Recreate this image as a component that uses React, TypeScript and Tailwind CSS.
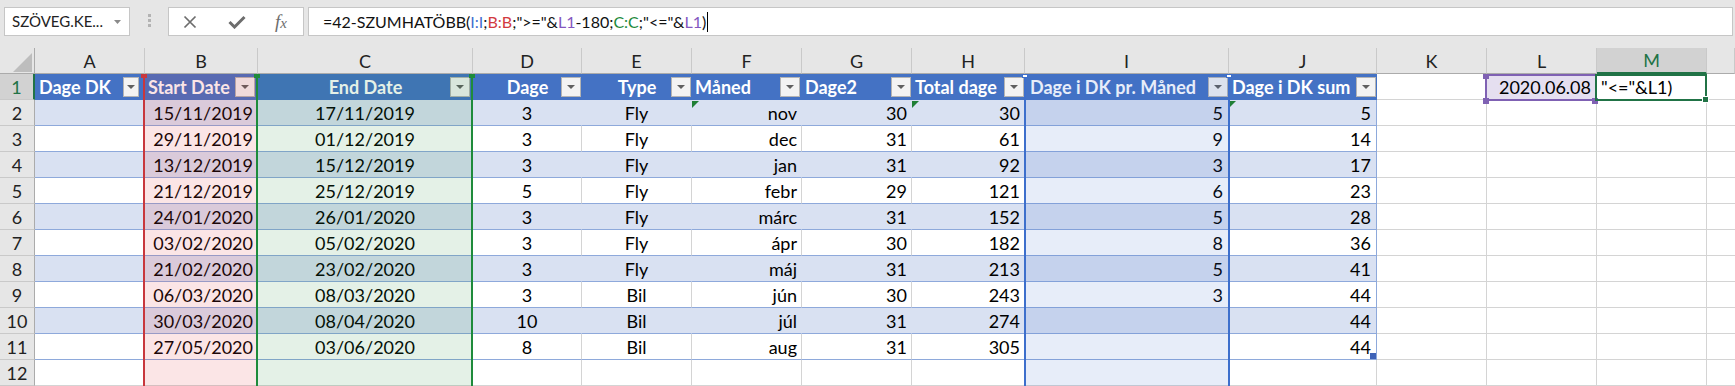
import React from 'react';

const rows: string[][] = [
  ['15/11/2019', '17/11/2019', '3', 'Fly', 'nov', '30', '30', '5', '5'],
  ['29/11/2019', '01/12/2019', '3', 'Fly', 'dec', '31', '61', '9', '14'],
  ['13/12/2019', '15/12/2019', '3', 'Fly', 'jan', '31', '92', '3', '17'],
  ['21/12/2019', '25/12/2019', '5', 'Fly', 'febr', '29', '121', '6', '23'],
  ['24/01/2020', '26/01/2020', '3', 'Fly', 'márc', '31', '152', '5', '28'],
  ['03/02/2020', '05/02/2020', '3', 'Fly', 'ápr', '30', '182', '8', '36'],
  ['21/02/2020', '23/02/2020', '3', 'Fly', 'máj', '31', '213', '5', '41'],
  ['06/03/2020', '08/03/2020', '3', 'Bil', 'jún', '30', '243', '3', '44'],
  ['30/03/2020', '08/04/2020', '10', 'Bil', 'júl', '31', '274', '', '44'],
  ['27/05/2020', '03/06/2020', '8', 'Bil', 'aug', '31', '305', '', '44'],
];

const letters = ['A', 'B', 'C', 'D', 'E', 'F', 'G', 'H', 'I', 'J', 'K', 'L', 'M', ''];

// alignment for A..J
const alignCls = [
  'justify-start pl-[4px]',
  'justify-end pr-[4px]',
  'justify-center',
  'justify-center',
  'justify-center',
  'justify-end pr-[4px]',
  'justify-end pr-[4px]',
  'justify-end pr-[4px]',
  'justify-end pr-[5px]',
  'justify-end pr-[5px]',
];

function FilterBtn({ narrow }: { narrow?: boolean }) {
  return (
    <div
      className={
        narrow
          ? 'w-[16px] h-[20px] shrink-0 bg-[#f3f3f3] border border-[#b4b4b4] flex items-center justify-center'
          : 'w-[20px] h-[20px] shrink-0 bg-[#f3f3f3] border border-[#b4b4b4] flex items-center justify-center'
      }
    >
      <svg width="8" height="4" viewBox="0 0 8 4">
        <polygon points="0,0 8,0 4,4" fill="#606060" />
      </svg>
    </div>
  );
}

function GreenTri() {
  return (
    <svg className="absolute left-0 top-[1px]" width="7" height="7" viewBox="0 0 7 7">
      <polygon points="0,0 7,0 0,7" fill="#1f7f36" />
    </svg>
  );
}

function Toolbar() {
  return (
    <div className="h-[48px] bg-[#e6e6e6] flex items-start pt-[7px]">
      <div className="ml-[4px] w-[126px] h-[29px] bg-white border border-[#c6c6c6] flex items-center justify-between pl-[7px] pr-[8px] text-[15px] text-[#222]">
        <span>SZÖVEG.KE...</span>
        <svg width="7" height="4" viewBox="0 0 7 4">
          <polygon points="0,0 7,0 3.5,4" fill="#8a8a8a" />
        </svg>
      </div>
      <div className="ml-[18px] mt-[7px] flex flex-col gap-[2px]">
        <div className="w-[3px] h-[3px] bg-[#b3b3b3]" />
        <div className="w-[3px] h-[3px] bg-[#b3b3b3]" />
        <div className="w-[3px] h-[3px] bg-[#b3b3b3]" />
      </div>
      <div className="ml-[17px] w-[136px] h-[29px] bg-white border border-[#c6c6c6] flex items-center pl-[14px]">
        <svg width="14" height="14" viewBox="0 0 14 14">
          <path d="M1.5 1.5 L12.5 12.5 M12.5 1.5 L1.5 12.5" stroke="#6d6d6d" strokeWidth="1.7" fill="none" />
        </svg>
        <svg className="ml-[31px]" width="18" height="14" viewBox="0 0 18 14">
          <path d="M1.5 7 L6.5 12 L16.5 2" stroke="#6d6d6d" strokeWidth="3" fill="none" strokeLinejoin="miter" />
        </svg>
        <span className="ml-[29px] font-['Liberation_Serif',serif] italic text-[19px] text-[#6d6d6d] leading-none">
          f<span className="text-[15px]">x</span>
        </span>
      </div>
      <div className="ml-[4px] flex-1 mr-[2px] h-[29px] bg-white border border-[#c6c6c6] flex items-center pl-[14px] text-[16px] text-[#111] whitespace-nowrap">
        <span>=42-SZUMHATÖBB(</span>
        <span className="text-[#3f6fd0]">I:I</span>
        <span>;</span>
        <span className="text-[#d23a3f]">B:B</span>
        <span>;"&gt;="&amp;</span>
        <span className="text-[#8457c0]">L1</span>
        <span>-180;</span>
        <span className="text-[#1d8a3c]">C:C</span>
        <span>;"&lt;="&amp;</span>
        <span className="text-[#8457c0]">L1</span>
        <span>)</span>
        <span className="ml-[1px] w-[1px] h-[20px] bg-black" />
      </div>
    </div>
  );
}

export default function App() {
  const headerCells = [
    <div key="h0" className="bg-[#4472c4] flex items-center justify-between pl-[4px] pr-[6px] overflow-hidden">
      <span>Dage DK</span>
      <FilterBtn narrow />
    </div>,
    <div key="h1" className="bg-[#4472c4] flex items-center justify-between pl-[3px] pr-[3px] overflow-hidden">
      <span>Start Date</span>
      <FilterBtn />
    </div>,
    <div key="h2" className="bg-[#4472c4] grid grid-cols-[24px_1fr_24px] items-center overflow-hidden">
      <span />
      <span className="text-center">End Date</span>
      <div className="flex justify-end pr-[3px]">
        <FilterBtn />
      </div>
    </div>,
    <div key="h3" className="bg-[#4472c4] grid grid-cols-[22px_1fr_22px] items-center overflow-hidden">
      <span />
      <span className="text-center">Dage</span>
      <div className="flex justify-end pr-[1px]">
        <FilterBtn />
      </div>
    </div>,
    <div key="h4" className="bg-[#4472c4] grid grid-cols-[22px_1fr_22px] items-center overflow-hidden">
      <span />
      <span className="text-center">Type</span>
      <div className="flex justify-end pr-[1px]">
        <FilterBtn />
      </div>
    </div>,
    <div key="h5" className="bg-[#4472c4] flex items-center justify-between pl-[3px] pr-[2px] overflow-hidden">
      <span>Måned</span>
      <FilterBtn />
    </div>,
    <div key="h6" className="bg-[#4472c4] flex items-center justify-between pl-[3px] pr-[1px] overflow-hidden">
      <span>Dage2</span>
      <FilterBtn />
    </div>,
    <div key="h7" className="bg-[#4472c4] flex items-center justify-between pl-[3px] pr-[1px] overflow-hidden">
      <span>Total dage</span>
      <FilterBtn />
    </div>,
    <div key="h8" className="bg-[#4472c4] flex items-center justify-between pl-[5px] pr-[1px] overflow-hidden">
      <span>Dage i DK pr. Måned</span>
      <FilterBtn />
    </div>,
    <div key="h9" className="bg-[#4472c4] flex items-center justify-between pl-[3px] pr-[1px] overflow-hidden">
      <span>Dage i DK sum</span>
      <FilterBtn />
    </div>,
  ];

  return (
    <div className="w-[1735px] h-[386px] overflow-hidden bg-white font-['Lato',sans-serif] text-black">
      <Toolbar />
      <div className="relative">
        <div className="grid grid-cols-[35px_110px_113px_215px_109px_110px_110px_110px_113px_204px_148px_110px_110px_110px_1fr] auto-rows-[26px] text-[18px] leading-none whitespace-nowrap">
          {/* column headers */}
          <div className="relative bg-[#e6e6e6] border-r border-b border-r-[#ababab] border-b-[#ababab]">
            <svg className="absolute left-0 top-0" width="35" height="26" viewBox="0 0 35 26">
              <polygon points="32,5 32,24 13,24" fill="#bdbdbd" />
            </svg>
          </div>
          {letters.map((l, i) =>
            l === 'M' ? (
              <div key={'c' + i} className="bg-[#d2d2d2] border-r border-b-2 border-r-[#c9c9c9] border-b-[#217346] flex items-center justify-center text-[#217346]">
                {l}
              </div>
            ) : (
              <div key={'c' + i} className="bg-[#e6e6e6] border-r border-b border-r-[#c9c9c9] border-b-[#ababab] flex items-center justify-center text-[#222]">
                {l}
              </div>
            )
          )}

          {/* row 1 */}
          <div className="bg-[#d2d2d2] border-r-2 border-b border-r-[#217346] border-b-[#c9c9c9] flex items-center justify-center text-[#217346]">
            1
          </div>
          {headerCells.map((c) => (
            <React.Fragment key={(c as any).key}>
              <div className="contents text-white font-bold">{c}</div>
            </React.Fragment>
          ))}
          <div className="bg-white border-r border-b border-[#d4d4d4]" />
          <div className="bg-[#e5dff0] border-r border-b border-[#d4d4d4] flex items-center justify-end pr-[5px]">2020.06.08</div>
          <div className="bg-white border-r border-b border-[#d4d4d4] flex items-center pl-[4px]">"&lt;="&amp;L1)</div>
          <div className="bg-white border-b border-[#d4d4d4]" />

          {/* data rows */}
          {rows.map((r, ri) => {
            const banded = ri % 2 === 0;
            const vals = ['', ...r];
            return (
              <React.Fragment key={'r' + ri}>
                <div className="bg-[#e6e6e6] border-r border-b border-r-[#ababab] border-b-[#c9c9c9] flex items-center justify-center text-[#222]">
                  {ri + 2}
                </div>
                {vals.map((v, ci) => {
                  const right =
                    ci === 9 ? 'border-r-[#8ea9db]' : banded ? 'border-r-[#d9e1f2]' : 'border-r-[#d4d4d4]';
                  const bg = banded ? 'bg-[#d9e1f2]' : 'bg-white';
                  return (
                    <div
                      key={'d' + ci}
                      className={`relative flex items-center border-r border-b border-b-[#8ea9db] ${right} ${bg} ${alignCls[ci]}`}
                    >
                      {ri === 0 && (ci === 5 || ci === 7 || ci === 9) && <GreenTri />}
                      {ri === 9 && ci === 9 && (
                        <div className="absolute right-[0px] bottom-[0px] w-[6px] h-[6px] bg-[#3f63b8]" />
                      )}
                      {v}
                    </div>
                  );
                })}
                <div className="bg-white border-r border-b border-[#d4d4d4]" />
                <div className="bg-white border-r border-b border-[#d4d4d4]" />
                <div className="bg-white border-r border-b border-[#d4d4d4]" />
                <div className="bg-white border-b border-[#d4d4d4]" />
              </React.Fragment>
            );
          })}

          {/* row 12 */}
          <div className="bg-[#e6e6e6] border-r border-b border-r-[#ababab] border-b-[#c9c9c9] flex items-center justify-center text-[#222]">
            12
          </div>
          {Array.from({ length: 13 }).map((_, i) => (
            <div key={'e' + i} className="bg-white border-r border-b border-[#d4d4d4]" />
          ))}
          <div className="bg-white border-b border-[#d4d4d4]" />
        </div>

        {/* range highlight overlays */}
        <div className="pointer-events-none absolute left-[145px] top-[26px] w-[111px] bottom-0 bg-[rgba(224,57,62,0.13)]" />
        <div className="pointer-events-none absolute left-[258px] top-[26px] w-[213px] bottom-0 bg-[rgba(31,139,58,0.12)]" />
        <div className="pointer-events-none absolute left-[1026px] top-[26px] w-[202px] bottom-0 bg-[rgba(59,111,208,0.12)]" />

        <div className="pointer-events-none absolute left-[143px] top-[26px] w-[2px] bottom-0 bg-[#c8373d]" />
        <div className="pointer-events-none absolute left-[256px] top-[26px] w-[2px] bottom-0 bg-[#1e8b3b]" />
        <div className="pointer-events-none absolute left-[471px] top-[26px] w-[2px] bottom-0 bg-[#1e8b3b]" />
        <div className="pointer-events-none absolute left-[1024px] top-[26px] w-[2px] bottom-0 bg-[#3d6fcc]" />
        <div className="pointer-events-none absolute left-[1228px] top-[26px] w-[2px] bottom-0 bg-[#3d6fcc]" />

        {/* handles */}
        <div className="pointer-events-none absolute left-[141px] top-[26px] w-[6px] h-[4px] bg-[#c8373d]" />
        <div className="pointer-events-none absolute left-[254px] top-[26px] w-[6px] h-[4px] bg-[#1e8b3b]" />
        <div className="pointer-events-none absolute left-[469px] top-[26px] w-[6px] h-[4px] bg-[#1e8b3b]" />
        <div className="pointer-events-none absolute left-[1022px] top-[26px] w-[6px] h-[4px] bg-white border border-[#3d6fcc]" />
        <div className="pointer-events-none absolute left-[1226px] top-[26px] w-[6px] h-[4px] bg-white border border-[#3d6fcc]" />

        {/* L1 reference box */}
        <div className="pointer-events-none absolute left-[1485px] top-[26px] w-[112px] h-[27px] border-2 border-[#7f61b3]" />
        <div className="pointer-events-none absolute left-[1483px] top-[26px] w-[6px] h-[5px] bg-[#7f61b3]" />
        <div className="pointer-events-none absolute left-[1483px] top-[50px] w-[6px] h-[6px] bg-[#7f61b3]" />
        <div className="pointer-events-none absolute left-[1592px] top-[50px] w-[6px] h-[6px] bg-[#7f61b3]" />

        {/* M1 active cell */}
        <div className="pointer-events-none absolute left-[1595px] top-[26px] w-[112px] h-[27px] border-2 border-[#217346]" />
        <div className="pointer-events-none absolute left-[1702px] top-[48px] w-[7px] h-[7px] bg-[#217346] border border-white" />
      </div>
    </div>
  );
}
